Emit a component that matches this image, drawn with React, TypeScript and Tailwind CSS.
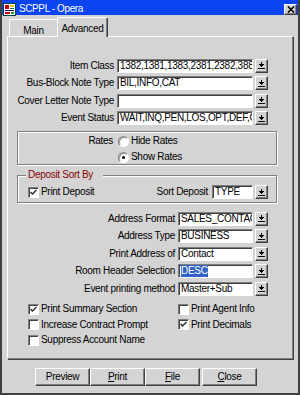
import React from "react";

const sunken =
  "border border-t-[#808080] border-l-[#808080] border-r-white border-b-white shadow-[inset_1px_1px_0_#404040]";
const raised =
  "border border-t-white border-l-white border-r-[#404040] border-b-[#404040] shadow-[inset_-1px_-1px_0_#808080]";
const etched = "border border-[#808080] shadow-[inset_1px_1px_0_#fff,1px_1px_0_#fff]";

function DropBtn() {
  return (
    <div className={`ml-[2px] flex h-[14px] w-[13px] shrink-0 items-center justify-center bg-[#d4d4d4] ${raised}`}>
      <svg width="7" height="7" viewBox="0 0 7 7" shapeRendering="crispEdges">
        <rect x="3" y="0" width="1" height="2" fill="#000" />
        <rect x="1" y="2" width="5" height="1" fill="#000" />
        <rect x="2" y="3" width="3" height="1" fill="#000" />
        <rect x="3" y="4" width="1" height="1" fill="#000" />
        <rect x="0" y="6" width="7" height="1" fill="#000" />
      </svg>
    </div>
  );
}

function Field({ w, value, sel }: { w: string; value: string; sel?: boolean }) {
  return (
    <div className={`flex h-[14px] shrink-0 items-center overflow-hidden whitespace-nowrap bg-white pl-[2px] ${sunken} ${w}`}>
      {sel ? <span className="bg-[#3163c6] text-white">{value}</span> : <span>{value}</span>}
    </div>
  );
}

function Row({ label, lw, fw, value, sel }: { label: string; lw: string; fw: string; value: string; sel?: boolean }) {
  return (
    <div className="flex h-[17.5px] items-center">
      <div className={`shrink-0 whitespace-nowrap pr-[3px] text-right ${lw}`}>{label}</div>
      <Field w={fw} value={value} sel={sel} />
      <DropBtn />
    </div>
  );
}

function Check({ on }: { on?: boolean }) {
  return (
    <span className={`flex h-[11px] w-[11px] shrink-0 items-center justify-center bg-white ${sunken}`}>
      {on && (
        <svg width="7" height="7" viewBox="0 0 7 7">
          <path d="M0.5 3 L2.5 5 L6.5 1" fill="none" stroke="#303030" strokeWidth="1.5" />
        </svg>
      )}
    </span>
  );
}

function Radio({ on }: { on?: boolean }) {
  return (
    <span className="flex h-[11px] w-[11px] shrink-0 items-center justify-center rounded-full border border-t-[#808080] border-l-[#808080] border-r-white border-b-white bg-white shadow-[inset_1px_1px_0_#a0a0a0]">
      {on && <span className="h-[3px] w-[3px] rounded-full bg-black" />}
    </span>
  );
}

function CheckRow({ label, on }: { label: string; on?: boolean }) {
  return (
    <div className="flex h-[15.5px] items-center">
      <Check on={on} />
      <span className="ml-[2px] whitespace-nowrap">{label}</span>
    </div>
  );
}

function Btn({ children, extra = "" }: { children: React.ReactNode; extra?: string }) {
  return (
    <div className={`flex h-[18px] w-[55px] items-center justify-center bg-[#d4d4d4] ${raised} ${extra}`}>{children}</div>
  );
}

export default function App() {
  return (
    <div className="flex h-[395px] w-[300px] flex-col overflow-hidden border-x-2 border-b-2 border-[#404040] bg-[#d4d4d4] font-['Liberation_Sans',Arial,sans-serif] text-[10px] leading-[12px] tracking-[-0.3px] text-black">
      {/* title bar */}
      <div className="flex h-[15px] shrink-0 items-center bg-[#0a44f0] px-[1px] pt-[3px]">
        <svg width="13" height="13" viewBox="0 0 13 13" shapeRendering="crispEdges">
          <rect x="0.5" y="0.5" width="12" height="12" fill="#fff" stroke="#004040" />
          <rect x="2" y="2" width="4" height="4" fill="#d00000" />
          <rect x="7" y="2" width="4" height="2" fill="#e8c000" />
          <rect x="7" y="5" width="4" height="1" fill="#008080" />
          <rect x="2" y="7" width="9" height="1" fill="#000080" />
          <rect x="2" y="9" width="5" height="2" fill="#d00000" />
          <rect x="8" y="9" width="3" height="2" fill="#20a020" />
        </svg>
        <span className="ml-[3px] tracking-[-0.4px] text-white">SCPPL - Opera</span>
        <div className={`ml-auto flex h-[11px] w-[13px] items-center justify-center bg-[#d4d4d4] ${raised}`}>
          <svg width="8" height="7" viewBox="0 0 8 7">
            <path d="M1 0.5 L7 6.5 M7 0.5 L1 6.5" stroke="#000" strokeWidth="1.6" />
          </svg>
        </div>
      </div>

      {/* tabs */}
      <div className="-mb-[1px] flex h-[22px] shrink-0 items-end pl-[7px]">
        <div className="mb-[1px] flex h-[17px] w-[48px] justify-center rounded-tl-[2px] border-l border-t border-l-white border-t-white pt-[5px]">
          Main
        </div>
        <div className="relative z-10 flex h-[20px] w-[51px] justify-center rounded-t-[2px] border-l border-r border-t border-l-white border-r-[#404040] border-t-white bg-[#d4d4d4] pt-[5px] shadow-[inset_-1px_0_0_#808080]">
          Advanced
        </div>
      </div>

      {/* panel */}
      <div className="ml-[5px] flex h-[323px] w-[286px] shrink-0 flex-col border border-b-[#808080] border-l-white border-r-[#808080] border-t-white shadow-[1px_1px_0_#404040]">
        <div className="mt-[20px]">
          <Row label="Item Class" lw="w-[109px]" fw="w-[136px]" value="1382,1381,1383,2381,2382,3883" />
          <Row label="Bus-Block Note Type" lw="w-[109px]" fw="w-[136px]" value="BIL,INFO,CAT" />
          <Row label="Cover Letter Note Type" lw="w-[109px]" fw="w-[136px]" value="" />
          <Row label="Event Status" lw="w-[109px]" fw="w-[136px]" value="WAIT,INQ,PEN,LOS,OPT,DEF,CAN,ACT" />
        </div>

        <div className={`ml-[9px] mt-[4px] h-[34px] w-[260px] pt-[1px] ${etched}`}>
          <div className="flex h-[16px] items-center">
            <span className="w-[95px] text-right">Rates</span>
            <span className="ml-[5px]">
              <Radio />
            </span>
            <span className="ml-[2px]">Hide Rates</span>
          </div>
          <div className="flex h-[16px] items-center pl-[100px]">
            <Radio on />
            <span className="ml-[2px]">Show Rates</span>
          </div>
        </div>

        <div className={`relative ml-[9px] mt-[10px] h-[28px] w-[260px] ${etched}`}>
          <span className="absolute -top-[7px] left-[8px] bg-[#d4d4d4] pl-[2px] pr-[10px] text-[#880000]">Deposit Sort By</span>
          <div className="mt-[9px] flex h-[14px] items-center">
            <span className="ml-[10px]">
              <Check on />
            </span>
            <span className="ml-[2px]">Print Deposit</span>
            <div className="ml-auto mr-[8px] flex items-center">
              <span>Sort Deposit</span>
              <span className="ml-[4px]">
                <Field w="w-[41px]" value="TYPE" />
              </span>
              <DropBtn />
            </div>
          </div>
        </div>

        <div className="mt-[7px]">
          <Row label="Address Format" lw="w-[170px]" fw="w-[75px]" value="SALES_CONTACT" />
          <Row label="Address Type" lw="w-[170px]" fw="w-[75px]" value="BUSINESS" />
          <Row label="Print Address of" lw="w-[170px]" fw="w-[75px]" value="Contact" />
          <Row label="Room Header Selection" lw="w-[170px]" fw="w-[75px]" value="DESC" sel />
          <Row label="Event printing method" lw="w-[170px]" fw="w-[75px]" value="Master+Sub" />
        </div>

        <div className="mt-[4px] flex">
          <div className="ml-[20px] w-[150px]">
            <CheckRow label="Print Summary Section" on />
            <CheckRow label="Increase Contract Prompt" />
            <CheckRow label="Suppress Account Name" />
          </div>
          <div>
            <CheckRow label="Print Agent Info" />
            <CheckRow label="Print Decimals" on />
          </div>
        </div>
      </div>

      {/* buttons */}
      <div className="ml-[33px] mt-[9px] flex">
        <Btn>Preview</Btn>
        <Btn>
          <span className="underline">P</span>rint
        </Btn>
        <Btn>
          <span className="underline">F</span>ile
        </Btn>
        <Btn extra="ml-[2px]">
          <span className="underline">C</span>lose
        </Btn>
      </div>
    </div>
  );
}
